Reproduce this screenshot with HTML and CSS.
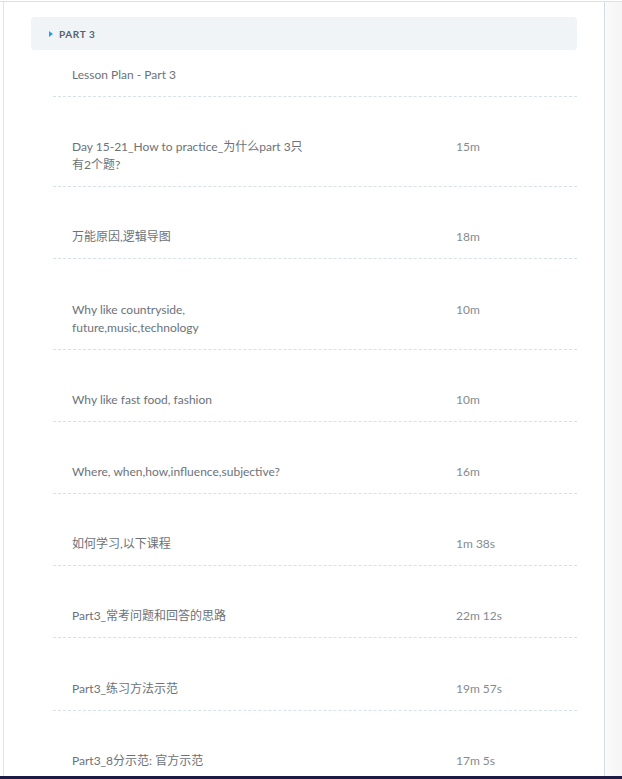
FILE: index.html
```html
<!doctype html>
<html lang="en">
<head>
    <meta charset="utf-8">
    <meta name="viewport" content="width=device-width, initial-scale=1">
    <title>Part 3</title>
    <link rel="stylesheet" href="styles.css">
</head>
<body>
    <div class="frame">
        <main class="panel">
            <div class="section-head"><span class="caret"></span>Part 3</div>
            <ul class="lessons">
                <li class="lesson first"><span class="title">Lesson Plan - Part 3</span></li>
                <li class="lesson"><span class="title">Day 15-21_How to practice_为什么part 3只有2个题?</span><span class="time">15m</span></li>
                <li class="lesson"><span class="title">万能原因,逻辑导图</span><span class="time">18m</span></li>
                <li class="lesson"><span class="title">Why like countryside, future,music,technology</span><span class="time">10m</span></li>
                <li class="lesson"><span class="title">Why like fast food, fashion</span><span class="time">10m</span></li>
                <li class="lesson"><span class="title">Where, when,how,influence,subjective?</span><span class="time">16m</span></li>
                <li class="lesson"><span class="title">如何学习,以下课程</span><span class="time">1m 38s</span></li>
                <li class="lesson"><span class="title">Part3_常考问题和回答的思路</span><span class="time">22m 12s</span></li>
                <li class="lesson"><span class="title">Part3_练习方法示范</span><span class="time">19m 57s</span></li>
                <li class="lesson"><span class="title">Part3_8分示范: 官方示范</span><span class="time">17m 5s</span></li>
            </ul>
        </main>
        <aside class="side"></aside>
    </div>
    <div class="bottom-edge"></div>
</body>
</html>
```

FILE: styles.css
```css
body {
    margin: 0;
    background: #fff;
    font-family: Lato, "Noto Sans CJK SC", sans-serif;
    color: #6c7279;
    font-size: 12px;
    overflow: hidden;
}

.frame {
    display: flex;
    margin-top: 1px;
    border-top: 1px solid #e0e0e0;
    min-height: 800px;
}
.panel {
    margin-left: 3px;
    width: 602px;
    border-left: 1px solid #e4e4e4;
    border-right: 1px solid #d2dee3;
    padding: 15px 27px 0;
    box-sizing: border-box;
}
.side {
    flex: 1;
    background: linear-gradient(to right, #fafafa, #f5f5f5);
}

.section-head {
    background: #f0f4f7;
    border-radius: 4px;
    height: 33px;
    display: flex;
    align-items: center;
    padding-left: 18px;
    font-size: 10px;
    font-weight: bold;
    letter-spacing: 0.6px;
    text-transform: uppercase;
    color: #58616b;
}
.caret {
    width: 0; height: 0;
    border-top: 3.5px solid transparent;
    border-bottom: 3.5px solid transparent;
    border-left: 4px solid #2f9bef;
    margin-right: 6px;
}

.lessons {
    list-style: none;
    margin: 0 0 0 22px;
    padding: 0;
}
.lesson {
    display: grid;
    grid-template-columns: 384px auto;
    padding: 41.2px 0 12px 19px;
    line-height: 18px;
    border-bottom: 1px dashed #d6e2e6;
}
.lesson.first { padding-top: 16px; }
.title { max-width: 240px; }
.time { color: #858b91; }

.bottom-edge {
    position: fixed;
    left: 0; right: 0; bottom: 0;
    height: 3px;
    background: #1d1a45;
}
```
